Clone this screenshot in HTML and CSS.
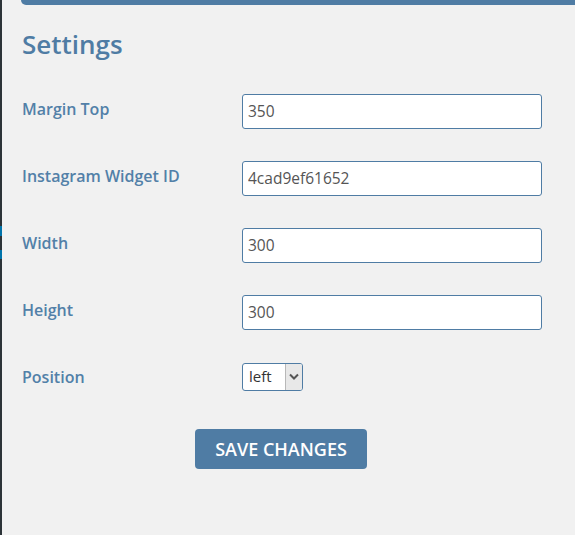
FILE: index.html
```html
<!DOCTYPE html>
<html>
<head>
<meta charset="utf-8">
<link rel="stylesheet" href="styles.css">
</head>
<body>
<div class="adminbar-edge">
  <span class="edge-mark edge-mark-a"></span>
  <span class="edge-mark edge-mark-b"></span>
</div>
<div class="wrap">
  <div class="topbar"></div>
  <h1 class="title">Settings</h1>
  <form class="form">
    <div class="row">
      <label class="label">Margin Top</label>
      <input class="field" type="text" value="350">
    </div>
    <div class="row">
      <label class="label">Instagram Widget ID</label>
      <input class="field" type="text" value="4cad9ef61652">
    </div>
    <div class="row">
      <label class="label">Width</label>
      <input class="field" type="text" value="300">
    </div>
    <div class="row">
      <label class="label">Height</label>
      <input class="field" type="text" value="300">
    </div>
    <div class="row">
      <label class="label">Position</label>
      <div class="select">
        <span class="select-value">left</span>
        <span class="select-arrow">
          <svg width="10" height="7" viewBox="0 0 10 7"><path d="M1 1.5 L5 5.5 L9 1.5" fill="none" stroke="#555" stroke-width="2"/></svg>
        </span>
      </div>
    </div>
    <div class="actions">
      <button class="save" type="button">SAVE CHANGES</button>
    </div>
  </form>
</div>
</body>
</html>
```
FILE: styles.css
```css
html, body {
  margin: 0;
  padding: 0;
  background: #f1f1f1;
  font-family: "Open Sans", "Liberation Sans", sans-serif;
  height: 535px;
  overflow: hidden;
}
body {
  display: flex;
}
.adminbar-edge {
  position: relative;
  width: 2px;
  background: #2c3338;
  flex: none;
}
.edge-mark {
  position: absolute;
  left: 0;
  width: 2px;
  background: #0073aa;
}
.edge-mark-a { top: 226px; height: 10px; }
.edge-mark-b { top: 250px; height: 9px; }
.wrap {
  flex: 1;
  padding-left: 19px;
}
.topbar {
  height: 5px;
  background: #4f7ca4;
  border-bottom-left-radius: 6px;
}
.title {
  margin: 24px 0 0 1px;
  font-size: 26px;
  font-weight: 600;
  color: #4f7ca4;
  line-height: 30px;
}
.form {
  margin-top: 35px;
}
.row {
  display: grid;
  grid-template-columns: 221px 300px;
  align-items: center;
  height: 35px;
  margin-bottom: 32px;
}
.label {
  padding-left: 1px;
  font-size: 16px;
  font-weight: 600;
  color: #5280a8;
  position: relative;
  top: -3px;
}
.field {
  box-sizing: border-box;
  width: 300px;
  height: 35px;
  border: 1px solid #4f7ca4;
  border-radius: 3px;
  background: #fff;
  padding: 0 5px 1px;
  font-family: "Open Sans", "Liberation Sans", sans-serif;
  font-size: 15.5px;
  color: #555;
}
.select {
  box-sizing: border-box;
  width: 61px;
  height: 28px;
  border: 1px solid #4f7ca4;
  border-radius: 3px;
  background: #fff;
  display: flex;
  align-items: stretch;
  overflow: hidden;
  position: relative;
  top: -3px;
}
.select-value {
  flex: 1;
  padding-left: 6px;
  font-size: 15px;
  line-height: 25px;
  color: #333;
}
.select-arrow {
  width: 16px;
  background: #e8e8e8;
  border-left: 1px solid #b8b8b8;
  display: flex;
  align-items: center;
  justify-content: center;
}
.actions {
  display: flex;
  padding-left: 174px;
  margin-top: 4px;
}
.save {
  width: 172px;
  height: 40px;
  background: #4f7ca4;
  border: none;
  border-radius: 4px;
  color: #fff;
  font-family: "Open Sans", "Liberation Sans", sans-serif;
  font-size: 18px;
  font-weight: 600;
  padding: 0;
}
```
